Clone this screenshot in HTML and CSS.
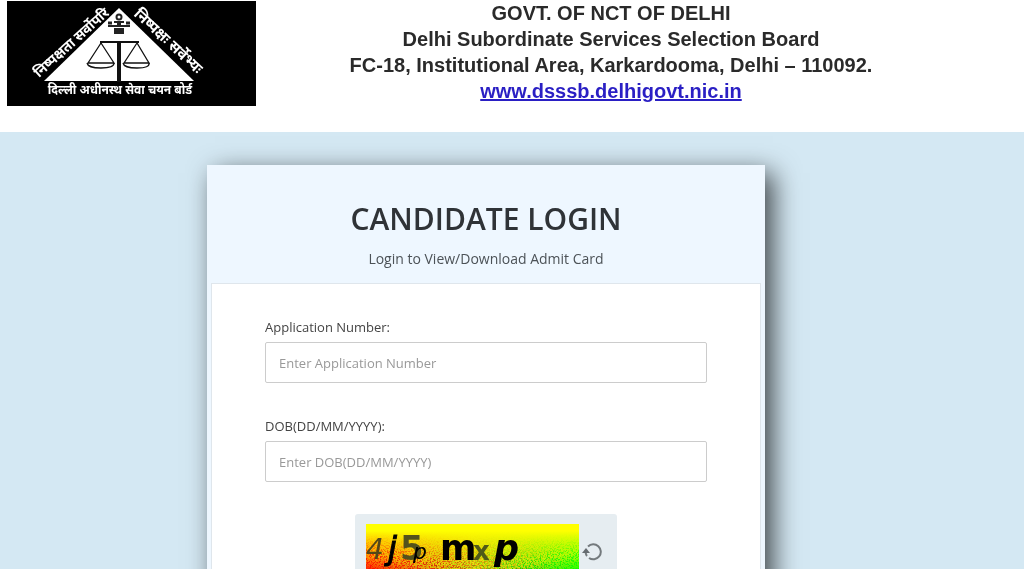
FILE: index.html
```html
<!DOCTYPE html>
<html lang="en">
<head>
<meta charset="utf-8">
<title>Candidate Login</title>
<link rel="stylesheet" href="styles.css">
</head>
<body>
<header class="banner">
  <svg class="banner-logo" viewBox="0 0 249 106" role="img" aria-label="DSSSB emblem">
    <rect y="1" width="249" height="105" fill="#000"/>
    <path d="M112 8 187 81H37Z" fill="#fff"/>
    <g fill="none" stroke="#111" stroke-width="1.3">
      <path d="M93 42H132" stroke-width="2"/>
      <path d="M112 41V82" stroke-width="4"/>
      <path d="M94 43 81 63H107L94 43M130 43 117 63H142Z"/>
      <path d="M80 63Q81 68 94 68T107 63M116 63Q117 68 130 68T142 63"/>
    </g>
    <g fill="none" stroke="#222" stroke-width="2">
      <circle cx="112" cy="17" r="2.5"/>
      <path d="M107 22H117M101 26H123" />
      <path d="M101 23H105M110 24H114M119 23H123" stroke-width="3"/>
      <path d="M108 29H116V33H108ZM109 31H115"/>
    </g>
    <g class="logo-text">
      <text x="113" y="94" text-anchor="middle" font-size="12">दिल्ली अधीनस्थ सेवा चयन बोर्ड</text>
      <text transform="translate(32 78) rotate(-42)" font-size="14">निष्पक्षता सर्वोपरि</text>
      <text transform="translate(126 15) rotate(43)" font-size="15">निष्पक्षः सर्वेभ्यः</text>
    </g>
  </svg>
  <div class="banner-text">
    <p>GOVT. OF NCT OF DELHI</p>
    <p>Delhi Subordinate Services Selection Board</p>
    <p>FC-18, Institutional Area, Karkardooma, Delhi – 110092.</p>
    <p><a href="#">www.dsssb.delhigovt.nic.in</a></p>
  </div>
</header>
<main class="page">
  <section class="card">
    <div class="card-head">
      <h1>CANDIDATE LOGIN</h1>
      <p>Login to View/Download Admit Card</p>
    </div>
    <form class="card-body">
      <div class="field">
        <label for="app-no">Application Number:</label>
        <input id="app-no" type="text" placeholder="Enter Application Number">
      </div>
      <div class="field">
        <label for="dob">DOB(DD/MM/YYYY):</label>
        <input id="dob" type="text" placeholder="Enter DOB(DD/MM/YYYY)">
      </div>
      <div class="captcha">
        <svg class="captcha-image" viewBox="0 0 213 70" role="img" aria-label="Captcha">
          <defs>
            <linearGradient id="across"><stop offset="0" stop-color="#f00"/><stop offset=".5" stop-color="#c0a010"/><stop offset="1" stop-color="#0f0"/></linearGradient>
            <linearGradient id="down" x2="0" y2="1"><stop offset="0" stop-color="#ff0"/><stop offset=".1" stop-color="#ff0"/><stop offset=".7" stop-color="#ff0" stop-opacity="0"/></linearGradient>
            <linearGradient id="fade" x2="0" y2="1"><stop offset=".1" stop-color="#000"/><stop offset=".5" stop-color="#fff"/></linearGradient>
            <mask id="grain"><rect width="213" height="70" fill="url(#fade)"/></mask>
            <filter id="noise" x="0" y="0" width="1" height="1"><feTurbulence type="fractalNoise" baseFrequency=".7" numOctaves="2" seed="4"/><feColorMatrix values="5 0 0 0 -2  0 5 0 0 -2  0 0 0 0 .2  0 0 0 0 .6"/></filter>
          </defs>
          <rect width="213" height="70" fill="url(#across)"/>
          <rect width="213" height="70" fill="url(#down)"/>
          <g class="grain" mask="url(#grain)"><rect width="213" height="70" filter="url(#noise)"/></g>
          <g class="captcha-text">
            <text x="0" y="35" font-size="28" font-style="italic" fill="#554718">4</text>
            <text x="22" y="35" font-size="32" font-style="italic" stroke="#000">j</text>
            <text x="34" y="36" font-size="34" font-weight="bold" fill="#54521c">5</text>
            <text x="47" y="35" font-size="22" font-style="italic">p</text>
            <text x="74" y="36" font-size="35" font-weight="bold">m</text>
            <text x="107" y="36" font-size="26" font-weight="bold" fill="#505a18">x</text>
            <text x="128" y="36" font-size="35" font-style="italic" font-weight="bold">p</text>
          </g>
        </svg>
        <button class="refresh" type="button" aria-label="Refresh captcha">
          <svg viewBox="0 0 20 20"><path d="M6 4.500A7.500 7.500 0 1 1 7 16M3.500 10Q4 13 5 14" fill="none" stroke="#747a7d" stroke-width="2"/><path d="M0 11 4 6 8 11Z" fill="#666c70"/></svg>
        </button>
      </div>
    </form>
  </section>
</main>
</body>
</html>
```
FILE: styles.css
```css
* { box-sizing: border-box; }
body {
  margin: 0;
  background: #d4e8f3;
  color: #333;
  font-family: "Open Sans", "Noto Sans", sans-serif;
}
p, h1 { margin: 0; }

.banner {
  display: flex;
  align-items: flex-start;
  min-height: 132px;
  padding-left: 7px;
  background: #fff;
}
.banner-logo { flex: none; width: 249px; height: 106px; }
.logo-text {
  fill: #fff;
  font-family: "Noto Sans", "Noto Sans Devanagari", sans-serif;
  font-weight: bold;
}
.banner-text {
  flex: 1;
  padding-right: 58px;
  color: #2a2a2a;
  font: bold 20px/26px "Liberation Sans", Arial, sans-serif;
  text-align: center;
}
.banner-text a { color: #2a1fc4; }

.page {
  display: flex;
  justify-content: center;
  padding: 33px 52px 0 0;
  overflow: hidden;
}
.card {
  width: 100%;
  max-width: 558px;
  padding: 0 4px;
  background: #eef7ff;
  box-shadow: 8px 8px 25px rgba(0, 0, 0, .7);
}
.card-head { padding: 32px 0 14px; text-align: center; }
.card-head h1 { font-size: 30px; font-weight: 600; line-height: 44px; color: #2f3337; }
.card-head p { padding-top: 8px; font-size: 14px; line-height: 20px; color: #4c5257; }
.card-body {
  padding: 32px 53px;
  background: #fff;
  border: 1px solid #dfe6ec;
}
.field { display: flex; flex-direction: column; gap: 4px; margin-bottom: 32px; }
.field label { font-size: 13px; line-height: 22px; color: #444; }
.field input {
  width: 100%;
  height: 41px;
  padding: 0 13px;
  border: 1px solid #ccc;
  border-radius: 2px;
  background: #fff;
  font: 13px "Open Sans", "Noto Sans", sans-serif;
}
.field input::placeholder { color: #999; }

.captcha {
  display: flex;
  gap: 3px;
  width: fit-content;
  margin: 0 auto;
  padding: 10px 15px 10px 11px;
  border-radius: 3px;
  background: #e6edf1;
}
.captcha-image { width: 213px; height: 70px; }
.grain { mix-blend-mode: overlay; }
.captcha-text { font-family: "DejaVu Sans", sans-serif; }
.refresh { align-self: flex-start; margin-top: 18px; padding: 0; border: 0; background: none; }
.refresh svg { display: block; width: 20px; height: 20px; }
```
